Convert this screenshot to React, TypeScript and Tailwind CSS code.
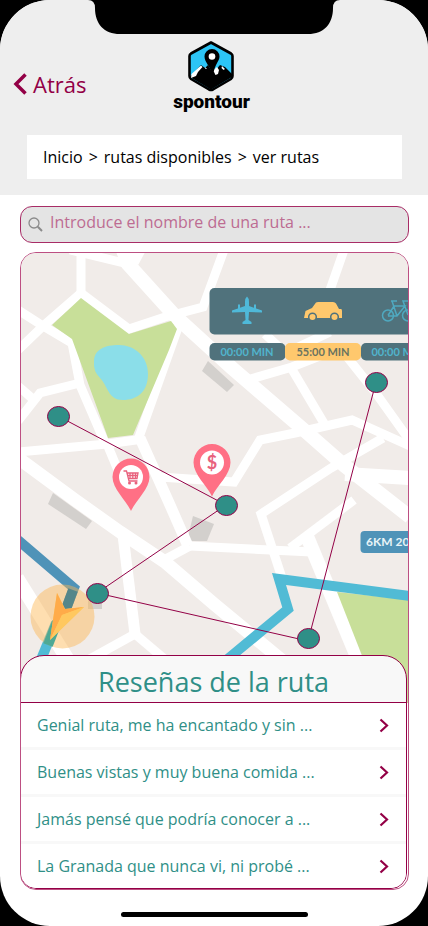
import React from "react";

const reviews = [
  "Genial ruta, me ha encantado y sin ...",
  "Buenas vistas y muy buena comida ...",
  "Jamás pensé que podría conocer a ...",
  "La Granada que nunca vi, ni probé ...",
];

const stops = [
  [58, 416],
  [226, 505],
  [97, 593],
  [308, 638],
  [376, 382],
];

function Logo() {
  return (
    <div className="flex flex-col items-center">
      <svg width="48" height="52" viewBox="0 0 48 52" aria-hidden="true">
        <path d="M24 2.5 L44 13.5 Q45.5 14.5 45.5 16 V36 Q45.5 38 44 39 L26 49.5 Q24 50.5 22 49.5 L4 39 Q2.500 38 2.500 36 V16 Q2.500 14.500 4 13.500 Z" fill="#2cc5f6" stroke="#000" strokeWidth="2.600" strokeLinejoin="round" />
        <path d="M3 37 L14 25 L18 28 L21 25 L24 30 L28 31 L33 25 L38 27 L45 34 V37 L25 49 H23 Z" fill="#000" />
        <path d="M4 38 L4.500 34 L14 25.500 L15.500 27 L11 32 L9 36 Z" fill="#fff" />
        <path d="M30 27 L32 30 L31 34 L28.500 35 L27 32 L25.500 31 Z M35 26 L38 29 L36.500 30 L34.500 28 Z M18 27 L20 29 L18.500 29 Z" fill="#fff" />
        <path d="M25 9 A7.500 7.500 0 0 1 32.500 16.500 C32.500 21 28 24 26.500 33 H24.500 C23 26 17.500 22 17.500 16.500 A7.500 7.500 0 0 1 25 9 Z" fill="#000" />
        <circle cx="25" cy="16.500" r="3.300" fill="#fff" />
      </svg>
      <span className="font-['Roboto',sans-serif] text-[19px] leading-5 font-black text-black">
        spontour
      </span>
    </div>
  );
}

function Pin({ x, y, children }: { x: number; y: number; children: React.ReactNode }) {
  return (
    <g transform={`translate(${x} ${y})`}>
      <path d="M0 34 C-5 23 -18.500 12 -18.500 0 A18.500 18.500 0 0 1 18.500 0 C18.500 12 5 23 0 34 Z" fill="#ff7085" />
      <circle r="12" fill="#fff" />
      {children}
    </g>
  );
}

function RouteMap() {
  return (
    <svg
      className="block w-full"
      viewBox="21 253 387 450"
      preserveAspectRatio="xMidYMin slice"
      role="img"
      aria-label="Mapa de la ruta"
    >
      <rect x="0" y="240" width="430" height="480" fill="#f1ece9" />
      <g fill="#d3d0cd">
        <path d="M53 493 L92 521 L86 529 L48 504 Z" />
        <path d="M208 361 L234 385 L227 392 L202 371 Z" />
        <path d="M193 516 L214 524 L207 541 L187 541 Z" />
        <path d="M88 600 H102 V609 H88 Z" />
      </g>
      <g fill="none" stroke="#fff">
        <g strokeWidth="9">
          <path d="M81 250 V293" />
          <path d="M18 350 L43 326 L81 293 L129 329 L165 317 L203 307 L224 250" />
          <path d="M18 310 L43 326 L72 343 L80 385 L105 443" />
          <path d="M18 421 L40 393 L80 383" />
          <path d="M18 386 L34 400" />
          <path d="M180 322 L138 440" />
          <path d="M18 452 L107 444 L143 439" />
          <path d="M107 444 L120 475" />
          <path d="M160 477 L234 482 L260 440 L295 433 L352 420 L410 446" />
          <path d="M247 380 L292 367 L335 350" />
          <path d="M290 366 L325 425" />
          <path d="M340 348 L375 392 L410 441" />
          <path d="M383 438 L331 468 L261 514 L282 578" />
          <path d="M190 546 L312 552" />
          <path d="M290 548 L354 500" />
          <path d="M162 561 L190 546" />
          <path d="M88 660 L135 634 L168 662" />
          <path d="M70 250 L128 264" />
          <path d="M330 290 L344 250" />
          <path d="M265 334 L280 348 M292 350 L330 332" />
        </g>
        <path d="M121 245 L128 264 L175 316 L232 368 L304 430 L345 466 L410 517" strokeWidth="14" />
        <path d="M133 262 L141 247" strokeWidth="12" />
        <path d="M345 474 L410 478" strokeWidth="14" />
        <path d="M18 458 L75 500 L120 532 L165 562 L214 604 L284 662" strokeWidth="13" />
        <path d="M140 438 L170 505 L188 546" strokeWidth="11" />
        <path d="M123 535 L135 634" strokeWidth="11" />
        <path d="M17 578 L68 660" strokeWidth="14" />
        <path d="M306 534 L360 664" strokeWidth="14" />
      </g>
      <path d="M81 298 L129 334 L171 321 L177 329 L169 350 L133 435 L108 438 L76 350 L72 339 L52 325 Z" fill="#c8df99" />
      <path d="M337 592 L410 600 V704 H381 Z" fill="#c8df99" />
      <path d="M94 362 C94 349 105 345 119 345 C134 345 148 356 148 374 C148 392 137 400 123 400 C108 400 108 386 100 378 Q93 371 94 362 Z" fill="#8bdee9" />

      <path d="M18 540 L74 588 L66 609" fill="none" stroke="#4f93b8" strokeWidth="10" />
      <path d="M56 623 L40 662" fill="none" stroke="#51bbd5" strokeWidth="10" />
      <path d="M224 662 L288 609 L279 579 L410 596" fill="none" stroke="#51bbd5" strokeWidth="10" />
      <circle cx="62.500" cy="616.500" r="32" fill="#fdb64f" fillOpacity="0.450" />
      <path d="M73 590 L66 609" stroke="#55868a" strokeWidth="10" />
      <path d="M57 622 L48 645" stroke="#4fa994" strokeWidth="10" />
      <path d="M57 593 L65 609 L84 607 L50 640 Z" fill="#ffc85f" />
      <path d="M57 593 L65 609 L84 607 L62 615 L50 640 Z" fill="#ffab49" />
      <path d="M62 615 L84 607 L50 640 Z" fill="#ffc85f" />

      <rect x="209.500" y="288" width="220" height="46.500" rx="5" fill="#50727c" />
      <g fill="#50727c">
        <rect x="209.500" y="343" width="76" height="17.500" rx="5" />
        <rect x="361" y="343" width="76" height="17.500" rx="5" />
      </g>
      <rect x="285" y="343" width="76" height="17.500" rx="5" fill="#ffc86d" />
      <g fontFamily="Lato, sans-serif" fontSize="11" fontWeight="700" textAnchor="middle">
        <text x="247" y="356" fill="#50b4cd">00:00 MIN</text>
        <text x="323" y="356" fill="#6a7360">55:00 MIN</text>
        <text x="398" y="356" fill="#50b4cd">00:00 MIN</text>
      </g>
      <path d="M247 296.500 Q249 298 249 302 V306 L262 310.500 V312.500 L249 312 L248.500 320 L251.500 322 V324 H242.500 V322 L245.500 320 L245 312 L232 312.500 V310.500 L245 306 V302 Q245 298 247 296.500 Z M238 304.500 H240 V309 H238 Z M254 304.500 H256 V309 H254 Z" fill="#4fb9d9" />
      <path d="M304 318 L305.500 311 L312 308 L316 302.500 Q317 302 318 302 H333 Q335 302 336 303.500 L339 309 H341 Q342 309 342 311 V318 Z" fill="#ffc86d" />
      <g fill="#ffc86d" stroke="#50727c" strokeWidth="1.500">
        <circle cx="312.500" cy="317" r="3.800" />
        <circle cx="334.500" cy="317" r="3.800" />
      </g>
      <g fill="none" stroke="#4fa9c0" strokeWidth="1.500">
        <circle cx="388" cy="315.500" r="5.500" />
        <circle cx="408" cy="315.500" r="5.500" />
        <path d="M388 315.500 L394 306 H405 L397 316 H388 M397 316 L392 301 M391 301 H397 M408 315 L403 301 H408" />
      </g>
      <rect x="360.500" y="531" width="70" height="22" rx="4" fill="#4f93b8" />
      <text x="366" y="546" fill="#e8f3f7" fontFamily="Lato, sans-serif" fontSize="12" fontWeight="700">6KM 20</text>

      <Pin x={131} y={477}>
        <path d="M-7.500 -6 H-4.500 L-2 4 H6.500 M-3.500 -4 H7 L6 1.500 H-2.500 M-1 -4 V1 M1.800 -4 V1 M4.500 -4 V1 M-3 -1.500 H6.500" fill="none" stroke="#e8627d" strokeWidth="1.300" />
        <circle cx="-1.500" cy="6" r="1.500" fill="#e8627d" />
        <circle cx="5" cy="6" r="1.500" fill="#e8627d" />
      </Pin>
      <Pin x={212} y={462.5}>
        <text y="6.500" textAnchor="middle" fill="#e8627d" fontFamily="Lato, sans-serif" fontSize="18" fontWeight="700">$</text>
      </Pin>

      <polyline points="58,416 226,505 97,593 308,641 376,382" fill="none" stroke="#930046" strokeWidth="1" />
      {stops.map(([x, y]) => (
        <ellipse key={x} cx={x + 0.5} cy={y + 0.5} rx="11" ry="10" fill="#2f8f87" stroke="#930046" strokeWidth="1" />
      ))}
    </svg>
  );
}

export default function App() {
  return (
    <div className="min-h-screen bg-black font-['Open_Sans','Noto_Sans',sans-serif]">
      <div className="relative flex min-h-screen flex-col overflow-hidden rounded-[50px] bg-white">
        <svg className="absolute top-0 left-1/2 -translate-x-1/2" width="252" height="34" viewBox="0 0 252 34" aria-hidden="true">
          <path d="M0 0 Q7 0 7 8 C7 24 16 34 32 34 H220 C236 34 245 24 245 8 Q245 0 252 0 Z" fill="#000" />
        </svg>

        <header className="bg-[#eeeeee] pt-10 pr-[26px] pb-4 pl-[27px]">
          <div className="-mr-2 -ml-3.5 grid grid-cols-[1fr_auto_1fr] items-center">
            <button type="button" className="flex items-center gap-0.5 pt-4 text-[22px] leading-8 text-[#930046]">
              <svg width="18" height="22" viewBox="0 0 18 22" fill="none" stroke="currentColor" strokeWidth="3.500" aria-hidden="true">
                <path d="M12.500 1.500 L3 11 L12.500 20.500" />
              </svg>
              Atrás
            </button>
            <Logo />
          </div>
          <nav aria-label="Ruta de navegación" className="mt-[23px] flex gap-1.5 bg-white px-4 py-2.5 text-base leading-6 text-black">
            <a href="#inicio">Inicio</a>
            <span>&gt;</span>
            <a href="#rutas">rutas disponibles</a>
            <span>&gt;</span>
            <a href="#ver" aria-current="page">ver rutas</a>
          </nav>
        </header>

        <main className="pt-[11px] pr-[19px] pl-5">
          <div className="flex h-[37px] items-center gap-[7px] rounded-xl border border-[#a82c66] bg-[#e4e4e4] px-[7px]">
            <svg width="15" height="15" viewBox="0 0 15 15" fill="none" stroke="#8b8b8b" aria-hidden="true">
              <circle cx="6" cy="6" r="5" strokeWidth="1.300" />
              <path d="M9.800 9.800 L14 14" strokeWidth="2" />
            </svg>
            <input
              type="text"
              aria-label="Buscar ruta"
              placeholder="Introduce el nombre de una ruta ..."
              className="min-w-0 flex-1 bg-transparent pb-1.5 text-base leading-6 text-[#930046] outline-none placeholder:text-[#bd6c92] placeholder:opacity-100"
            />
          </div>

          <div className="mt-[9px] overflow-hidden rounded-2xl border border-[#bd4f82]">
            <RouteMap />
            <section className="relative -mt-12 mr-px -ml-px overflow-hidden rounded-t-[24px] rounded-b-2xl border border-[#930046] bg-[#f8f8f8]">
              <h1 className="border-b border-[#930046] pt-[7px] pb-px text-center text-[27px] leading-[38px] text-[#2f8f87]">
                Reseñas de la ruta
              </h1>
              <ul className="flex flex-col gap-[3px]">
                {reviews.map((review) => (
                  <li key={review}>
                    <button type="button" className="flex w-full items-center justify-between bg-white py-2.5 pr-[17px] pl-4 text-left text-base leading-6 text-[#2f8f87]">
                      {review}
                      <svg width="10" height="15" viewBox="0 0 10 15" fill="none" stroke="#930046" strokeWidth="2.200" aria-hidden="true">
                        <path d="M1.500 1.500 L8 7.500 L1.500 13.500" />
                      </svg>
                    </button>
                  </li>
                ))}
              </ul>
            </section>
          </div>
        </main>

        <div className="mx-auto mt-auto mb-[9px] h-[5px] w-[187px] rounded-full bg-black" />
      </div>
    </div>
  );
}
